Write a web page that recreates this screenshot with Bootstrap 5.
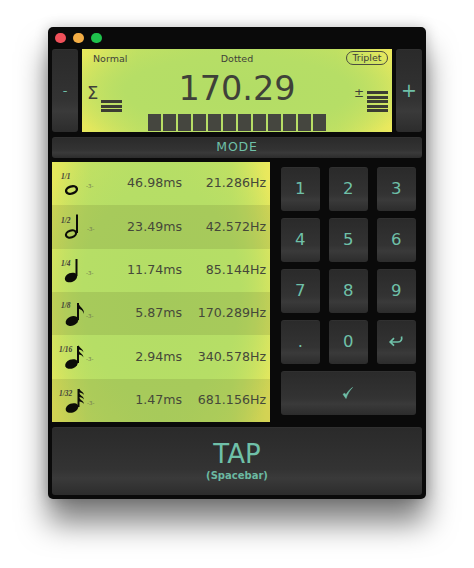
<!doctype html>
<html lang="en"><head><meta charset="utf-8"><title>Tap tempo</title>
<link href="https://cdn.jsdelivr.net/npm/bootstrap@5.3.0/dist/css/bootstrap.min.css" rel="stylesheet">
<style>
html,body{height:100%;background:#fff;overflow:hidden}
body{font-family:"DejaVu Sans",sans-serif;color:#3f4139}
.win{width:378px;height:472px;margin:27px 0 0 48px;background:#0a0a0a;border-radius:5px;padding:0 4px 4px;box-shadow:0 24px 30px rgba(0,0,0,.5),0 0 14px rgba(0,0,0,.22)}
.tbar{height:22px;gap:7.5px;padding-left:3px}
.dot{width:10.5px;height:10.5px;border-radius:50%}
.dot-r{background:#f0505a}.dot-y{background:#f3ad45}.dot-g{background:#1fc24c}
.key{--bs-btn-color:#6fc0a8;--bs-btn-hover-color:#6fc0a8;--bs-btn-active-color:#6fc0a8;--bs-btn-border-width:0;--bs-btn-padding-x:0;--bs-btn-padding-y:0;--bs-btn-border-radius:3px;background:linear-gradient(#2a2a2a,#333 62%,#3a3a3a 75%,#2c2c2c);color:#6fc0a8;display:flex;align-items:center;justify-content:center;font-family:"DejaVu Sans",sans-serif;box-shadow:inset 0 1px 0 rgba(255,255,255,.03)}
.topline{height:83px;gap:4px}
.side{width:26px;flex:none;font-size:13px}
.side.plus{font-size:19px}
.lcd{width:310px;flex:none;display:grid;grid-template-columns:66px 178px 66px;grid-template-rows:15px 1fr;position:relative}
.lcd,.tbl{background:radial-gradient(ellipse 62% 70% at 50% 50%,#b3dd66 0,#b6de66 58%,rgba(182,222,102,0) 100%),linear-gradient(90deg,#e8e85c,#c4e162 18%,#b6de66 50%,#c4e162 82%,#ece95d);background-color:#d8e562}
.toplbl{font-size:9.5px;padding-top:4px;line-height:12px;white-space:nowrap}
.lbl-l{padding-left:11px}.lbl-r{display:flex;justify-content:flex-end;padding:2px 4px 0 0}
.pill{border:1px solid #4b4d40;border-radius:7px;font-size:9.5px;line-height:12px;width:42px;height:14px;text-align:center}
.mid{text-align:center;display:flex;flex-direction:column;justify-content:flex-end;padding-bottom:1px}
.val{font-size:33.5px;line-height:38px;margin-bottom:6px;white-space:nowrap;letter-spacing:0}
.segs{display:flex;gap:2px}
.seg{width:13px;height:17px;background:#45463f;flex:none}
.ind{position:relative}
.bars{display:flex;flex-direction:column;gap:1.4px;width:21px}
.bars i{display:block;height:3px;background:#3c3d33}
.sig{font-size:18px;line-height:20px}
.ind-l{display:flex;align-items:flex-end;padding:0 0 20px 5px}
.ind-l .sig{margin-bottom:9px;margin-right:3px}
.ind-r{display:flex;align-items:flex-end;justify-content:flex-end;padding:0 4px 20px 0}
.ind-r .sig{font-size:12px;line-height:14px;margin-right:3px;margin-bottom:12px}
.modebtn{height:21px;margin-top:5px;font-size:12.5px;letter-spacing:.8px}
.midsec{height:260px;margin-top:4px}
.tbl{width:218px;flex:none;display:flex;flex-direction:column}
.trow{flex:1 1 0;display:flex;align-items:center;font-size:12.6px;color:#45483a}
.trow:nth-child(even){background:rgba(70,70,20,.13)}
.trow svg{width:48px;height:43px;flex:none}
.ms{width:82px;text-align:right}
.hz{width:84px;text-align:right}
.pad{display:grid;grid-template-columns:repeat(3,38.5px);grid-auto-rows:44px;column-gap:9.5px;row-gap:7px;padding:5px 0 0 11px}
.pad .key{font-size:16.5px}
.wide{grid-column:1/4;height:44px}
.tapbtn{height:68px;margin-top:5px;flex-direction:column;line-height:1}
.tapw{font-size:26px;line-height:29px}
.taps{font-size:10px;font-weight:700;line-height:13px;opacity:.95}
.nt{font:italic bold 7.5px "Liberation Serif",serif;fill:#3f4139}
.nt3{font:5.5px "DejaVu Sans",sans-serif;fill:#6e7850}
</style></head><body>
<div class="win d-flex flex-column">
 <div class="tbar d-flex align-items-center"><span class="dot dot-r"></span><span class="dot dot-y"></span><span class="dot dot-g"></span></div>
 <div class="topline d-flex">
  <button class="btn key side">-</button>
  <div class="lcd">
   <div class="toplbl lbl-l">Normal</div><div class="toplbl text-center">Dotted</div><div class="lbl-r"><span class="pill">Triplet</span></div>
   <div class="ind ind-l"><span class="sig">Σ</span><span class="bars"><i></i><i></i><i></i></span></div>
   <div class="mid"><div class="val">170.29</div><div class="segs"><span class="seg"></span><span class="seg"></span><span class="seg"></span><span class="seg"></span><span class="seg"></span><span class="seg"></span><span class="seg"></span><span class="seg"></span><span class="seg"></span><span class="seg"></span><span class="seg"></span><span class="seg"></span></div></div>
   <div class="ind ind-r"><span class="sig">±</span><span class="bars"><i></i><i></i><i></i><i></i><i></i></span></div>
  </div>
  <button class="btn key side plus">+</button>
 </div>
 <button class="btn key modebtn">MODE</button>
 <div class="midsec d-flex">
  <div class="tbl">
   <div class="trow"><svg viewBox="0 0 48 43"><text class="nt" x="9" y="17">1/1</text><ellipse cx="19.5" cy="28" rx="5.6" ry="3.5" transform="rotate(-18 19.5 28)" fill="none" stroke="#0c0c08" stroke-width="2.4"/><text class="nt3" x="34" y="26">-3-</text></svg><span class="ms">46.98ms</span><span class="hz">21.286Hz</span></div>
   <div class="trow"><svg viewBox="0 0 48 43"><text class="nt" x="9" y="18">1/2</text><ellipse cx="19" cy="29" rx="5.2" ry="3.4" transform="rotate(-18 19 29)" fill="none" stroke="#0c0c08" stroke-width="2.2"/><path d="M25 9.5V28" stroke="#0c0c08" stroke-width="2"/><text class="nt3" x="35" y="26">-3-</text></svg><span class="ms">23.49ms</span><span class="hz">42.572Hz</span></div>
   <div class="trow"><svg viewBox="0 0 48 43"><text class="nt" x="9" y="17">1/4</text><ellipse cx="19" cy="28.5" rx="6.4" ry="4.5" transform="rotate(-22 19 28.5)" fill="#0c0c08"/><path d="M24.5 10V27" stroke="#0c0c08" stroke-width="2"/><text class="nt3" x="34" y="26">-3-</text></svg><span class="ms">11.74ms</span><span class="hz">85.144Hz</span></div>
   <div class="trow"><svg viewBox="0 0 48 43"><text class="nt" x="9" y="16">1/8</text><ellipse cx="20" cy="29" rx="6.6" ry="4.6" transform="rotate(-22 20 29)" fill="#0c0c08"/><path d="M26 11V28" stroke="#0c0c08" stroke-width="2"/><path d="M26.5 11c.5 4 6 5 5.500 11-.6-3-3.500-5-5.500-5.500z" fill="#0c0c08"/><text class="nt3" x="34" y="26">-3-</text></svg><span class="ms">5.87ms</span><span class="hz">170.289Hz</span></div>
   <div class="trow"><svg viewBox="0 0 48 43"><text class="nt" x="7" y="17">1/16</text><ellipse cx="19.500" cy="29" rx="6.600" ry="4.500" transform="rotate(-22 19.500 29)" fill="#0c0c08"/><path d="M26 11V28" stroke="#0c0c08" stroke-width="2"/><path d="M26.500 10c1 3 4.500 3.500 5 7.500-.9-1.800-3-3-5-3zM26.500 15c1 3 4.500 3.500 5 7.500-.9-1.800-3-3-5-3z" fill="#0c0c08"/><text class="nt3" x="34" y="26">-3-</text></svg><span class="ms">2.94ms</span><span class="hz">340.578Hz</span></div>
   <div class="trow"><svg viewBox="0 0 48 43"><text class="nt" x="7" y="17">1/32</text><ellipse cx="20" cy="29" rx="6.600" ry="4.500" transform="rotate(-22 20 29)" fill="#0c0c08"/><path d="M26.500 10V28" stroke="#0c0c08" stroke-width="2"/><path d="M27 9.500c1 2.500 4.500 3 5 6.500-.9-1.500-3-2.500-5-2.500zM27 14c1 2.500 4.500 3 5 6.500-.9-1.500-3-2.500-5-2.500zM27 18.500c1 2.500 4.500 3 5 6.500-.9-1.500-3-2.500-5-2.500z" fill="#0c0c08"/><text class="nt3" x="35" y="26">-3-</text></svg><span class="ms">1.47ms</span><span class="hz">681.156Hz</span></div>
  </div>
  <div class="pad">
   <button class="btn key">1</button><button class="btn key">2</button><button class="btn key">3</button>
   <button class="btn key">4</button><button class="btn key">5</button><button class="btn key">6</button>
   <button class="btn key">7</button><button class="btn key">8</button><button class="btn key">9</button>
   <button class="btn key">.</button><button class="btn key">0</button>
   <button class="btn key" aria-label="Return"><svg width="16" height="14" viewBox="0 0 16 14"><path d="M13.500 1.500c.8 3-.5 5.500-3.500 5.500H2.500M6 3.200 2.200 7 6 10.600" fill="none" stroke="#6fc0a8" stroke-width="1.700"/></svg></button>
   <button class="btn key wide" aria-label="OK"><svg width="14" height="14" viewBox="0 0 14 14"><path d="M2 8.200 5 12.500C6.500 8 8.500 4.500 11.500 1.500 8.600 3.500 6.500 6.200 5 8.800L3.800 7.200z" fill="#6fc0a8" stroke="#6fc0a8" stroke-width=".6"/></svg></button>
  </div>
 </div>
 <button class="btn key tapbtn"><span class="tapw">TAP</span><span class="taps">(Spacebar)</span></button>
</div>
</body></html>
